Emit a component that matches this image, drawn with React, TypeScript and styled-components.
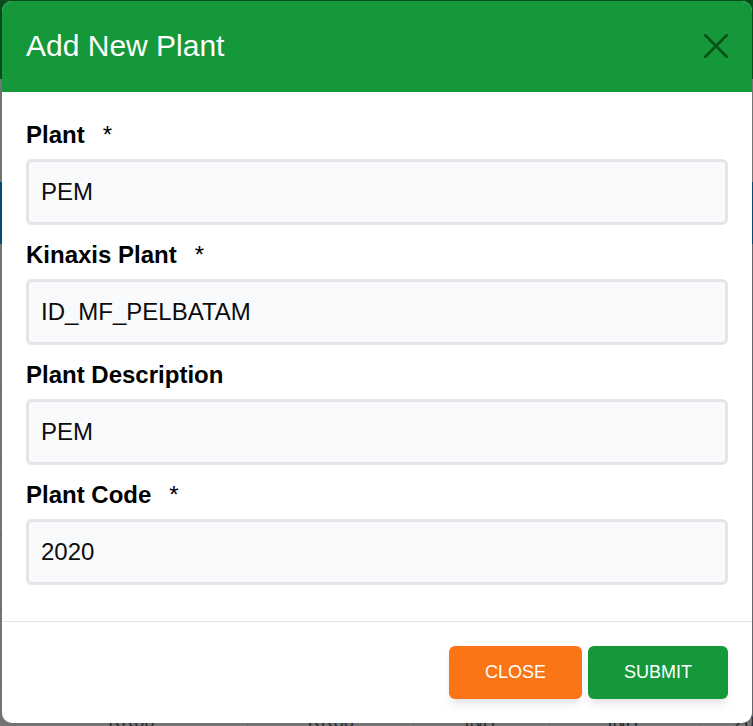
import React from "react";
import styled, { createGlobalStyle } from "styled-components";

const GlobalStyle = createGlobalStyle`
  *, *::before, *::after { box-sizing: border-box; }
  html, body { height: 100%; margin: 0; overflow: hidden; }
  body {
    font-family: "Liberation Sans", Arial, sans-serif;
    color: #000;
    background: #747474;
  }
  #root { height: 100%; }
  button, input { font: inherit; }
`;

const Screen = styled.div`
  display: grid;
  grid-template: minmax(0, 1fr) / minmax(0, 1fr);
  height: 100%;
  overflow: hidden;

  & > * { grid-area: 1 / 1; }
`;

const Backdrop = styled.div`
  min-height: 0;
  overflow: hidden;
  background: #747474;
`;

const BackdropBar = styled.div`
  height: 79px;
  background: #074d1b;
`;

const BackdropTable = styled.table`
  width: 100%;
  margin-top: 103px;
  border-spacing: 0;
  table-layout: fixed;
  font-size: 18px;
  color: #26292e;

  th { height: 62px; padding: 0; background: #034b73; }
  td {
    height: 73px;
    padding: 8px 0 0;
    border: 0 solid #646669;
    border-width: 0 1px 1px 0;
    text-align: center;
    white-space: nowrap;
  }
  td:last-child {
    padding-left: 34px;
    text-align: left;
  }
`;

const Col = styled.col<{ $share: number }>`
  width: ${({ $share }) => $share}%;
`;

const Dialog = styled.form`
  align-self: start;
  z-index: 1;
  margin: 1px 1px 3px 2px;
  overflow: hidden;
  background: #fff;
  border-radius: 10px;
`;

const Header = styled.header`
  display: flex;
  align-items: center;
  justify-content: space-between;
  height: 91px;
  padding: 0 24px 2px;
  background: #14983a;
`;

const Title = styled.h1`
  margin: 0;
  font-size: 30px;
  line-height: 36px;
  font-weight: 400;
  color: #fff;
`;

const IconButton = styled.button`
  display: flex;
  padding: 0;
  border: 0;
  background: none;
  color: #075219;
  cursor: pointer;
`;

const Body = styled.div`
  display: grid;
  gap: 12px;
  padding: 25px 24px 36px;
`;

const Field = styled.div`
  display: grid;
  gap: 6px;
`;

const Label = styled.label`
  display: flex;
  gap: 18px;
  font-size: 24px;
  line-height: 36px;
  font-weight: 700;
`;

const Required = styled.span`
  font-weight: 400;
`;

const Input = styled.input`
  width: 100%;
  height: 66px;
  padding: 0 12px;
  border: 3px solid #e4e5e9;
  border-radius: 6px;
  background: #f9fafc;
  color: #0c0c0d;
  font-size: 24px;
  outline: none;
`;

const Footer = styled.footer`
  display: flex;
  justify-content: flex-end;
  gap: 6px;
  padding: 24px;
  border-top: 1px solid #e2e4e6;
`;

const ActionButton = styled.button<{ $tone: string }>`
  height: 53px;
  padding: 0 36px;
  border: 0;
  border-radius: 6px;
  background: ${({ $tone }) => $tone};
  box-shadow: 0 6px 9px -2px rgba(0, 0, 0, 0.12);
  color: #fff;
  font-size: 18px;
  line-height: 27px;
  font-weight: 500;
  cursor: pointer;
`;

const columns = [2, 31, 22, 18, 20, 7];
const cells = ["", "RR06", "RR06", "INIT", "INIT", "2020"];
const fields = [
  { id: "plant", label: "Plant", value: "PEM", required: true },
  { id: "kinaxis-plant", label: "Kinaxis Plant", value: "ID_MF_PELBATAM", required: true },
  { id: "plant-description", label: "Plant Description", value: "PEM", required: false },
  { id: "plant-code", label: "Plant Code", value: "2020", required: true },
];

export default function App() {
  return (
    <>
      <GlobalStyle />
      <Screen>
        <Backdrop aria-hidden="true">
          <BackdropBar />
          <BackdropTable>
            <colgroup>
              {columns.map((share, i) => <Col key={i} $share={share} />)}
            </colgroup>
            <thead>
              <tr>{columns.map((_, i) => <th key={i} />)}</tr>
            </thead>
            <tbody>
              {[0, 1, 2, 3, 4, 5, 6].map((row) => (
                <tr key={row}>
                  {cells.map((text, i) => <td key={i}>{row === 6 ? text : null}</td>)}
                </tr>
              ))}
            </tbody>
          </BackdropTable>
        </Backdrop>
        <Dialog
          role="dialog"
          aria-labelledby="dialog-title"
          onSubmit={(event: React.FormEvent) => event.preventDefault()}
        >
          <Header>
            <Title id="dialog-title">Add New Plant</Title>
            <IconButton type="button" aria-label="Close dialog">
              <svg width="24" height="24" viewBox="0 0 24 24" fill="none" stroke="currentColor" strokeWidth="2.7" strokeLinecap="round">
                <path d="M1.3 1.3 22.7 22.7M22.7 1.3 1.3 22.7" />
              </svg>
            </IconButton>
          </Header>
          <Body>
            {fields.map(({ id, label, value, required }) => (
              <Field key={id}>
                <Label htmlFor={id}>
                  {label}
                  {required && <Required>*</Required>}
                </Label>
                <Input id={id} type="text" defaultValue={value} required={required} />
              </Field>
            ))}
          </Body>
          <Footer>
            <ActionButton type="button" $tone="#fb7415">CLOSE</ActionButton>
            <ActionButton type="submit" $tone="#14983a">SUBMIT</ActionButton>
          </Footer>
        </Dialog>
      </Screen>
    </>
  );
}
